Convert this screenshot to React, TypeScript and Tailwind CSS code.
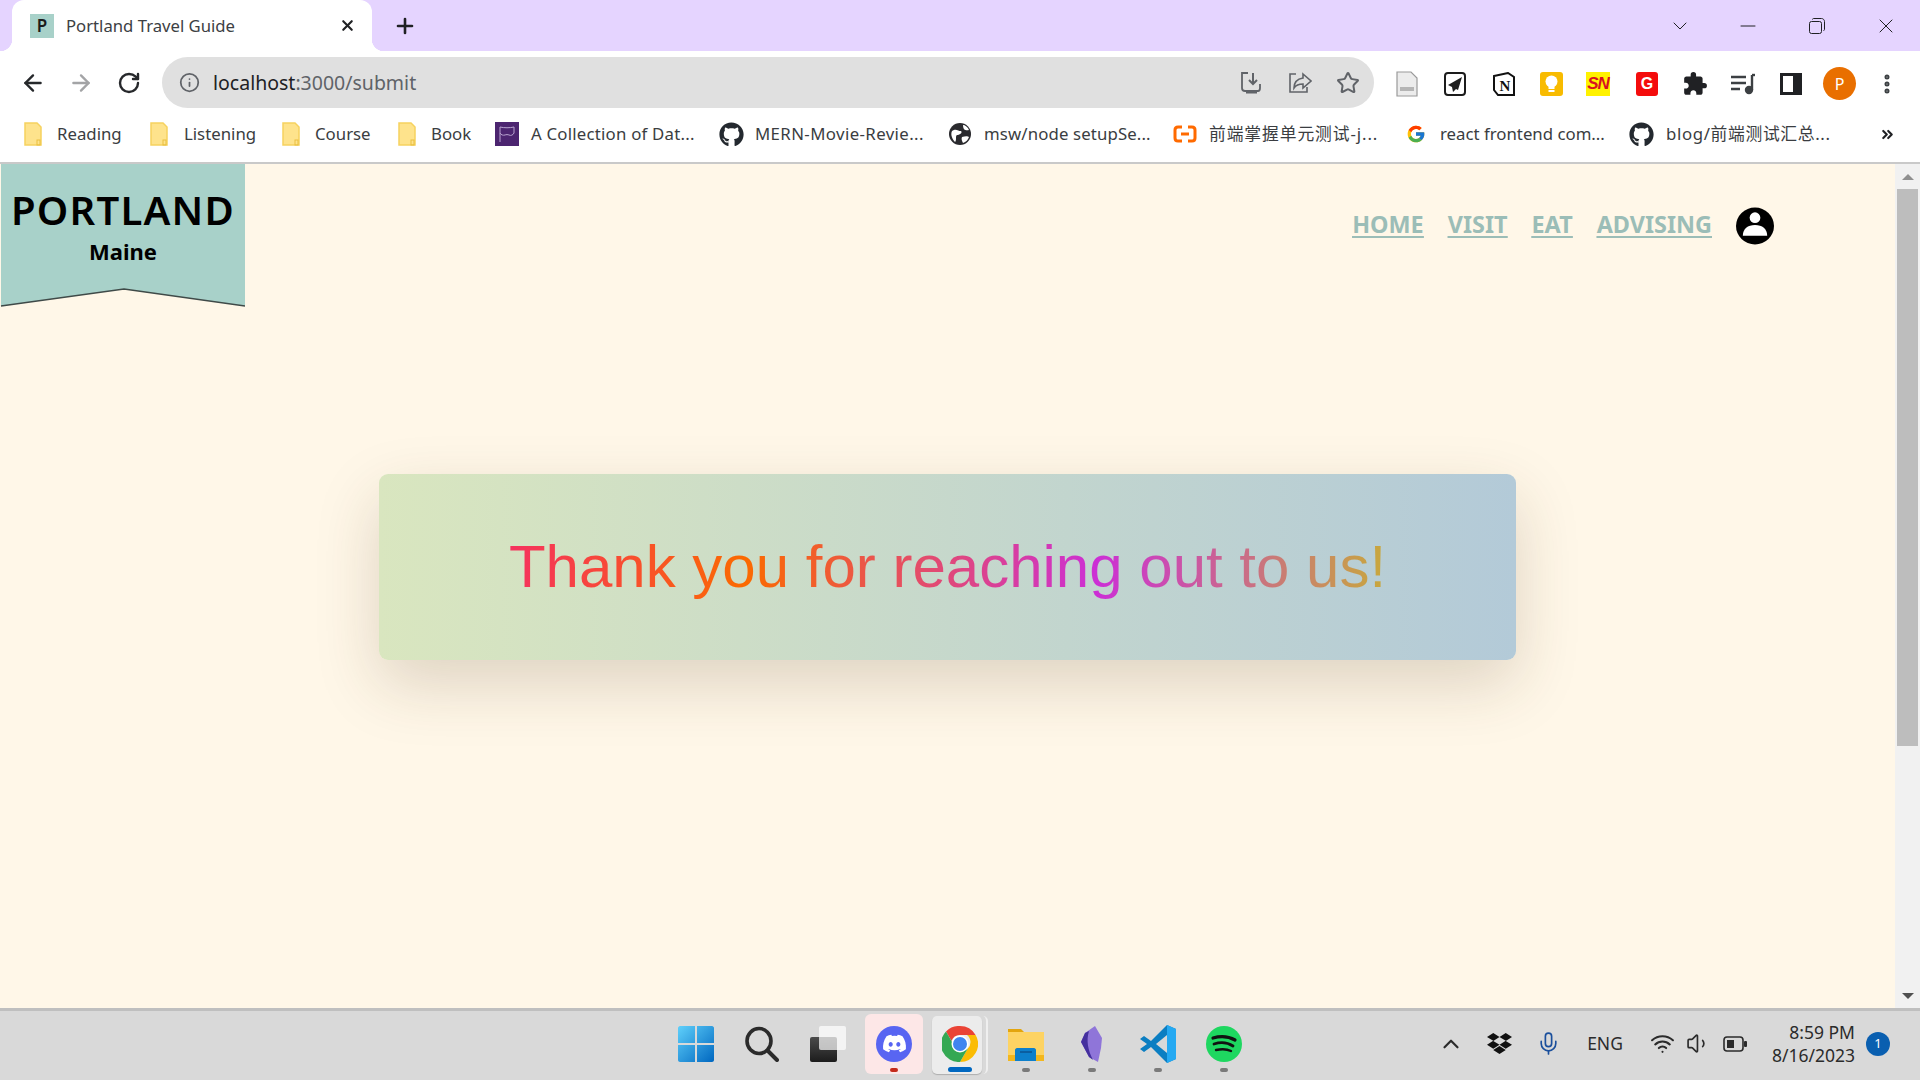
import React from 'react';
import {
  ArrowLeft,
  ArrowRight,
  ChevronDown,
  ChevronUp,
  ChevronsRight,
  Info,
  Mic,
  Minus,
  MoreVertical,
  Plus,
  RotateCw,
  Star,
  Volume1,
  Wifi,
  X,
} from 'lucide-react';
import { FaDiscord, FaDropbox, FaGithub } from 'react-icons/fa';
import { FcGoogle } from 'react-icons/fc';
import { MdExtension } from 'react-icons/md';

const sans = 'font-["Noto_Sans","Noto_Sans_CJK_SC",sans-serif]';

const FolderIcon = () => (
  <svg width="18" height="24" viewBox="0 0 18 24">
    <path d="M1 1h12l4 4v18H1z" fill="#fee38c" stroke="#f6d25f" strokeWidth="1.5" />
    <rect x="13" y="18" width="3" height="5" fill="none" stroke="#e9bf41" strokeWidth="1" />
  </svg>
);

const MaskIcon = () => (
  <div className="flex h-6 w-6 items-center justify-center bg-[#4c2570]">
    <svg width="18" height="18" viewBox="0 0 18 18" fill="none" stroke="#b9a4d0" strokeWidth="1">
      <path d="M2 2c4 1 10 1 14 0v6c-1 2-3 3-5 2-1-.5-3-.5-4 0-2 .5-4 0-5-2z" />
      <path d="M2 8v9" />
    </svg>
  </div>
);

const GlobeIcon = () => (
  <svg width="22" height="24" viewBox="0 0 22 22">
    <circle cx="11" cy="11" r="11" fill="#2a2a2e" />
    <path d="M3 8c4-3 6 0 9 0 2 2-2 4-4 4-2 1 0 5-2 7-2-2-5-7-3-11zM14 2c2 0 5 2 6 5-3 1-6 0-6-5zM13 14c3-1 6-1 7 0-1 3-3 5-6 6-1-2-2-4-1-6z" fill="#fff" />
  </svg>
);

const AliIcon = () => (
  <svg width="24" height="18" viewBox="0 0 24 18" fill="none" stroke="#ff6a00" strokeWidth="3">
    <path d="M9 2H5C3 2 2 3 2 5v8c0 2 1 3 3 3h4M15 2h4c2 0 3 1 3 3v8c0 2-1 3-3 3h-4M8 9h8" />
  </svg>
);

const bookmarks = [
  { label: 'Reading', icon: <FolderIcon />, cls: 'w-[126px] gap-[15px]' },
  { label: 'Listening', icon: <FolderIcon />, cls: 'w-[132px] gap-[16px]' },
  { label: 'Course', icon: <FolderIcon />, cls: 'w-[116px] gap-[15px]' },
  { label: 'Book', icon: <FolderIcon />, cls: 'w-[97px] gap-[15px]' },
  { label: 'A Collection of Dat...', icon: <MaskIcon />, cls: 'w-[224px] gap-[12px] tracking-[0.22px]' },
  { label: 'MERN-Movie-Revie...', icon: <FaGithub size={25} color="#24292f" />, cls: 'w-[230px] gap-[11px] tracking-[0.4px]' },
  { label: 'msw/node setupSe...', icon: <GlobeIcon />, cls: 'w-[224px] gap-[13px] tracking-[0.13px]' },
  { label: '前端掌握单元测试-j...', icon: <AliIcon />, cls: 'w-[233px] gap-[12px] tracking-[0.9px]' },
  { label: 'react frontend com...', icon: <FcGoogle size={20} />, cls: 'w-[223px] gap-[14px]' },
  { label: 'blog/前端测试汇总...', icon: <FaGithub size={25} color="#24292f" />, cls: 'w-[238px] gap-[12px] tracking-[0.65px]' },
];

const InstallIcon = () => (
  <svg width="24" height="24" viewBox="0 0 24 24" fill="none" stroke="#606368" strokeWidth="1.8">
    <path d="M9 2H3v15c0 2 1 3 3 3h13c1.500 0 2-1 2-3v-4" />
    <path d="M14 2v11M10 9l4 4 4-4" strokeWidth="2" />
    <path d="M7 21h11" strokeWidth="3" />
  </svg>
);

const ShareIcon = () => (
  <svg width="24" height="24" viewBox="0 0 24 24" fill="none" stroke="#606368" strokeWidth="1.6">
    <path d="M8 3H2v18h17v-5" />
    <path d="M15 3l8 7-8 7v-4c-4 0-7 1-9 4 0-6 3-9 9-10z" />
  </svg>
);

const Extensions = () => (
  <div className="flex items-center pt-[2px]">
    <svg className="ml-[22px]" width="22" height="26" viewBox="0 0 22 26">
      <path d="M1 1h14l6 6v18H1z" fill="#ececec" stroke="#9a9a9a" strokeWidth="1.200" />
      <rect x="4" y="16" width="14" height="4" fill="#b5b5b5" />
    </svg>
    <svg className="ml-[26px]" width="22" height="24" viewBox="0 0 22 24">
      <rect x="1" y="1" width="20" height="22" rx="3" fill="#fff" stroke="#1c1c1c" strokeWidth="2" />
      <path d="M18 5L4 13l4 2 1 5 3-3 2 1z" fill="#1c1c1c" />
    </svg>
    <svg className="ml-[27px]" width="22" height="24" viewBox="0 0 22 24">
      <path d="M1 4l14-3 6 4v18l-16 0-4-5z" fill="#fff" stroke="#111" strokeWidth="2" />
      <text x="12" y="19" textAnchor="middle" fontSize="15" fontWeight="700" fontFamily="Liberation Serif" fill="#111">N</text>
    </svg>
    <div className="ml-[25px] flex h-6 w-[23px] items-center justify-center rounded-[3px] bg-[#f8bb00]">
      <svg width="13" height="18" viewBox="0 0 13 18">
        <circle cx="6.500" cy="6.500" r="6" fill="#fff" />
        <rect x="3.500" y="11" width="6" height="3" fill="#fff" />
        <rect x="3.500" y="15" width="6" height="2" fill="#fff" />
      </svg>
    </div>
    <div className="ml-[23px] flex h-6 w-6 items-center justify-center bg-[#fff200] font-['Liberation_Sans',sans-serif] text-[17px] font-bold italic tracking-[-1px] text-[#d8121f]">
      SN
    </div>
    <div className="ml-[26px] flex h-6 w-[22px] items-center justify-center rounded-[3px] bg-[#f40c0c] font-['Liberation_Sans',sans-serif] text-[16px] font-bold text-white">
      G
    </div>
    <MdExtension className="ml-[24px]" size={26} color="#202124" />
    <svg className="ml-[23px]" width="24" height="22" viewBox="0 0 24 22" fill="none" stroke="#3c4043" strokeWidth="2.400">
      <path d="M0 4h15M0 10h15M0 16h9" />
      <path d="M21 2v15" />
      <path d="M21 2h3" />
      <circle cx="18" cy="17" r="3" fill="#3c4043" />
    </svg>
    <svg className="ml-[25px]" width="22" height="22" viewBox="0 0 22 22">
      <path d="M0 0h22v22H0z" fill="#202124" />
      <path d="M3 3h10v16H3z" fill="#fff" />
    </svg>
    <div className={`ml-[21px] flex h-[33px] w-[33px] items-center justify-center rounded-full bg-[#e96f00] text-[16px] text-white ${sans}`}>
      P
    </div>
    <MoreVertical className="ml-[19px]" size={24} strokeWidth={3} color="#3c4043" />
  </div>
);

const TabStrip = () => (
  <div className="flex h-[51px] items-center bg-[#e5d4ff]">
    <div className="relative ml-3 flex h-[51px] w-[360px] items-center rounded-t-xl bg-white pl-[18px] pr-[16px]">
      <div className="absolute bottom-0 left-[-12px] h-3 w-3 bg-[radial-gradient(circle_at_0_0,#e5d4ff_12px,#fff_12.5px)]" />
      <div className="absolute bottom-0 right-[-12px] h-3 w-3 bg-[radial-gradient(circle_at_100%_0,#e5d4ff_12px,#fff_12.5px)]" />
      <div className={`flex h-6 w-6 items-center justify-center bg-[#a8d1c9] text-[17px] font-semibold text-[#1c1c1c] ${sans}`}>
        P
      </div>
      <span className={`ml-3 flex-1 text-[16.7px] text-[#3c4043] ${sans}`}>Portland Travel Guide</span>
      <X size={17} strokeWidth={3} color="#202124" />
    </div>
    <Plus className="ml-[21px]" size={24} strokeWidth={2.6} color="#202124" />
    <div className="ml-auto flex items-center pr-[22px]">
      <ChevronDown size={24} strokeWidth={1} color="#202124" />
      <Minus className="ml-[44px]" size={24} strokeWidth={1} color="#202124" />
      <svg className="ml-[49px]" width="16" height="16" viewBox="0 0 16 16" fill="none" stroke="#202124" strokeWidth="1">
        <rect x="0.500" y="3.500" width="12" height="12" rx="2" />
        <path d="M3.500 1.500c0-.6.500-1 1-1h8c1.600 0 3 1.400 3 3v8c0 .6-.4 1-1 1" />
      </svg>
      <X className="ml-[49px]" size={24} strokeWidth={1} color="#202124" />
    </div>
  </div>
);

const Toolbar = () => (
  <div className="flex h-[63px] items-center bg-white pb-[6px] pt-[6px]">
    <ArrowLeft className="ml-[20px]" size={26} strokeWidth={2.2} color="#26282b" />
    <ArrowRight className="ml-[22px]" size={26} strokeWidth={2.2} color="#a3a4a6" />
    <RotateCw className="ml-[23px]" size={24} strokeWidth={2.4} color="#26282b" />
    <div className="ml-[21px] flex h-[51px] w-[1212px] shrink-0 items-center rounded-full bg-[#e0e0e0] pl-[17px] pr-[14px]">
      <Info size={21} color="#606368" />
      <div className={`ml-[13px] flex-1 text-[19.5px] text-[#202124] ${sans}`}>
        localhost<span className="text-[#5f6368]">:3000/submit</span>
      </div>
      <InstallIcon />
      <div className="ml-[25px]">
        <ShareIcon />
      </div>
      <Star className="ml-[24px]" size={24} strokeWidth={2} color="#606368" />
    </div>
    <Extensions />
  </div>
);

const BookmarkBar = () => (
  <div className={`flex h-[50px] items-center border-b-2 border-[#c9c9c9] bg-white pb-[8px] pl-[24px] text-[16.8px] text-[#3a3d41] ${sans}`}>
    {bookmarks.map((item) => (
      <div key={item.label} className={`flex shrink-0 items-center ${item.cls}`}>
        {item.icon}
        <span className="whitespace-nowrap">{item.label}</span>
      </div>
    ))}
    <ChevronsRight className="ml-[12px]" size={17} strokeWidth={3} color="#202124" />
  </div>
);

const Logo = () => (
  <div className="relative h-[143px] w-[245px]">
    <svg className="absolute inset-0" width="245" height="143" viewBox="0 0 245 143">
      <path d="M1 0h244v142L124 125 1 142z" fill="#a8d1c9" />
      <path d="M1 142l123-17 121 17" fill="none" stroke="#3f4a48" strokeWidth="1.500" />
    </svg>
    <div className={`relative flex flex-col items-center pl-[1px] pt-[22px] text-black ${sans}`}>
      <span className="text-[40px] font-semibold leading-[48px] tracking-[1.2px]">PORTLAND</span>
      <span className="mt-[3px] text-[22px] font-bold leading-[28px]">Maine</span>
    </div>
  </div>
);

const Avatar = () => (
  <svg className="translate-y-[2px]" width="38" height="38" viewBox="0 0 39 38">
    <ellipse cx="19.500" cy="19" rx="19.500" ry="19" fill="#000" />
    <circle cx="19.500" cy="10.500" r="5.500" fill="#fff" />
    <path d="M7 29c0-7 5-11 12.500-11S32 22 32 29z" fill="#fff" />
  </svg>
);

const Nav = () => (
  <div className={`flex items-center gap-[24px] pr-[121px] pt-[41px] text-[23.4px] font-bold leading-[32px] text-[#9bbdb7] underline underline-offset-[3px] ${sans}`}>
    <a>HOME</a>
    <a>VISIT</a>
    <a>EAT</a>
    <a>ADVISING</a>
    <Avatar />
  </div>
);

const Scrollbar = () => (
  <div className="flex w-[25px] flex-col items-center bg-[#f1f1f1]">
    <svg className="mt-[10px]" width="12" height="6" viewBox="0 0 12 6">
      <path d="M6 0l6 6H0z" fill="#8f8f8f" />
    </svg>
    <div className="mt-[9px] h-[557px] w-[21px] bg-[#bdbdbd]" />
    <svg className="mb-[9px] mt-auto" width="12" height="6" viewBox="0 0 12 6">
      <path d="M0 0h12L6 6z" fill="#505050" />
    </svg>
  </div>
);

const Page = () => (
  <div className="flex min-h-0 flex-1 bg-[#fff7e8]">
    <div className="flex-1">
      <div className="flex items-start justify-between">
        <Logo />
        <Nav />
      </div>
      <div className="ml-[379px] mt-[167px] flex h-[186px] w-[1137px] items-center justify-center rounded-[9px] bg-[linear-gradient(90deg,#d9e6bf,#b3cad8)] shadow-[0_24px_64px_rgba(70,50,20,0.18)]">
        <span className="bg-[linear-gradient(90deg,#f5325f_0%,#fb6a00_27%,#cc2fd5_67%,#c8a83c_100%)] bg-clip-text font-['Liberation_Sans',sans-serif] text-[60px] leading-[70px] text-transparent">
          Thank you for reaching out to us!
        </span>
      </div>
    </div>
    <Scrollbar />
  </div>
);

const WindowsIcon = () => (
  <svg width="36" height="36" viewBox="0 0 36 36">
    <defs>
      <linearGradient id="win" x1="0" y1="0" x2="1" y2="1">
        <stop offset="0" stopColor="#5fd0fb" />
        <stop offset="1" stopColor="#0067c0" />
      </linearGradient>
    </defs>
    <path d="M0 2c0-1 1-2 2-2h15v17H0zM19 0h15c1 0 2 1 2 2v15H19zM0 19h17v17H2c-1 0-2-1-2-2zM19 19h17v15c0 1-1 2-2 2H19z" fill="url(#win)" />
  </svg>
);

const SearchIcon = () => (
  <svg width="34" height="36" viewBox="0 0 34 36" fill="none" stroke="#2b2b2b">
    <ellipse cx="14" cy="15" rx="12" ry="12.500" strokeWidth="3.600" />
    <path d="M23 25l9 9" strokeWidth="4" strokeLinecap="round" />
  </svg>
);

const TaskViewIcon = () => (
  <div className="relative h-[36px] w-[36px]">
    <div className="absolute bottom-0 left-0 h-[25px] w-[27px] rounded-[2px] bg-[linear-gradient(#4b4b4b,#1c1c1c)]" />
    <div className="absolute right-0 top-0 h-[24px] w-[27px] rounded-[2px] bg-white/70" />
  </div>
);

const DiscordIcon = () => (
  <div className="flex h-[36px] w-[36px] items-center justify-center rounded-full bg-[#5865f2]">
    <FaDiscord size={25} color="#fff" />
  </div>
);

const ChromeIcon = () => (
  <svg width="36" height="36" viewBox="0 0 36 36">
    <path d="M18 0a18 18 0 0 1 15.600 9H18a9 9 0 0 0-8.500 6L4 5.500A18 18 0 0 1 18 0z" fill="#ea4335" />
    <path d="M33.600 9A18 18 0 0 1 18 36l7.800-13.500A9 9 0 0 0 25 9z" fill="#fbbc04" />
    <path d="M4 5.500l7.800 13.500A9 9 0 0 0 25.800 22.500L18 36A18 18 0 0 1 4 5.500z" fill="#34a853" />
    <circle cx="18" cy="18" r="8.500" fill="#fff" />
    <circle cx="18" cy="18" r="7" fill="#3f84ef" />
  </svg>
);

const FilesIcon = () => (
  <svg width="36" height="36" viewBox="0 0 36 36">
    <path d="M0 3h13l4 4h19v6H0z" fill="#e3a50e" />
    <path d="M0 6h36v29H0z" fill="#fdd363" />
    <path d="M0 29h36v6H0z" fill="#f3b71d" />
    <path d="M7 35V24c0-1 1-2 2-2h17c1 0 2 1 2 2v11z" fill="#0d7fcb" />
    <rect x="12" y="25" width="12" height="2" fill="#0b5ea0" />
  </svg>
);

const ObsidianIcon = () => (
  <svg width="22" height="36" viewBox="0 0 22 36">
    <path d="M14 0l7 12-1 10-3 14-9-5-8-15 4-9z" fill="#8f75d9" />
    <path d="M4 7L0 16l8 15 4 3C7 24 5 15 8 5z" fill="#45309e" />
  </svg>
);

const CodeIcon = () => (
  <svg width="36" height="38" viewBox="0 0 36 38">
    <path d="M27 0l9 4v30l-9 4L11 22l-7 5-4-3 7-5-7-5 4-3 7 5z" fill="#0b7ec2" />
    <path d="M27 0l9 4v30l-9 4z" fill="#25a9f2" />
    <path d="M27 10L16 19l11 9z" fill="#d9d9d9" />
  </svg>
);

const SpotifyIcon = () => (
  <svg width="36" height="36" viewBox="0 0 36 36" fill="none" stroke="#111" strokeLinecap="round">
    <circle cx="18" cy="18" r="18" fill="#1ed760" stroke="none" />
    <path d="M7 12c7-2 15-2 22 2" strokeWidth="3.200" />
    <path d="M8 18c6-2 13-2 19 2" strokeWidth="2.800" />
    <path d="M10 24c5-1 11-1 15 1" strokeWidth="2.400" />
  </svg>
);

const TaskSlot = ({ children, dot }: { children: React.ReactNode; dot?: string }) => (
  <div className="relative flex h-[65px] w-[66px] items-center justify-center">
    {children}
    {dot && <div className={`absolute bottom-[4px] left-1/2 h-1 w-2 -translate-x-1/2 rounded-full ${dot}`} />}
  </div>
);

const Taskbar = () => (
  <div className="grid h-[72px] grid-cols-[1fr_auto_1fr] items-center border-t-[3px] border-[#bfbfbf] bg-[#d9d9d9] pb-[4px]">
    <div />
    <div className="flex items-center">
      <TaskSlot>
        <WindowsIcon />
      </TaskSlot>
      <TaskSlot>
        <SearchIcon />
      </TaskSlot>
      <TaskSlot>
        <TaskViewIcon />
      </TaskSlot>
      <TaskSlot dot="bg-[#c42b1c]">
        <div className="absolute inset-x-[4px] bottom-[2px] top-[3px] rounded-[6px] bg-[#fde7e7]" />
        <div className="relative">
          <DiscordIcon />
        </div>
      </TaskSlot>
      <TaskSlot>
        <div className="absolute bottom-[2px] left-[8px] top-[5px] w-[53px] rounded-[5px] border-r-2 border-[#efefef]" />
        <div className="absolute bottom-[2px] left-[5px] top-[5px] w-[50px] rounded-[5px] bg-[#ececec] shadow-[0_1px_1px_rgba(0,0,0,0.2)]" />
        <div className="relative">
          <ChromeIcon />
        </div>
        <div className="absolute bottom-[4px] left-[21px] h-[5px] w-6 rounded-full bg-[#0067c0]" />
      </TaskSlot>
      <TaskSlot dot="bg-[#7a7a7a]">
        <FilesIcon />
      </TaskSlot>
      <TaskSlot dot="bg-[#7a7a7a]">
        <ObsidianIcon />
      </TaskSlot>
      <TaskSlot dot="bg-[#7a7a7a]">
        <CodeIcon />
      </TaskSlot>
      <TaskSlot dot="bg-[#7a7a7a]">
        <SpotifyIcon />
      </TaskSlot>
    </div>
    <div className={`flex items-center justify-end pr-[30px] text-[#2b2b2b] ${sans}`}>
      <ChevronUp size={26} strokeWidth={2} />
      <FaDropbox className="ml-[23px]" size={25} color="#111" />
      <Mic className="ml-[24px]" size={25} strokeWidth={1.6} color="#1a4f9c" />
      <span className="ml-[26px] text-[17.5px]">ENG</span>
      <Wifi className="ml-[27px]" size={25} strokeWidth={2} />
      <Volume1 className="ml-[11px]" size={25} strokeWidth={1.6} />
      <svg className="ml-[12px]" width="24" height="16" viewBox="0 0 24 16">
        <rect x="1" y="1" width="19" height="14" rx="3" fill="none" stroke="#2b2b2b" strokeWidth="1.600" />
        <rect x="4" y="4" width="7" height="8" fill="#2b2b2b" />
        <rect x="21" y="5" width="3" height="6" rx="1" fill="#2b2b2b" />
      </svg>
      <div className="ml-[25px] flex flex-col items-end text-[17.5px] leading-[23px]">
        <span>8:59 PM</span>
        <span>8/16/2023</span>
      </div>
      <div className="ml-[11px] flex h-6 w-6 items-center justify-center rounded-full bg-[#0a5fb0] text-[13px] text-white">
        1
      </div>
    </div>
  </div>
);

export default function App() {
  return (
    <div className="flex h-screen w-full flex-col overflow-hidden">
      <TabStrip />
      <Toolbar />
      <BookmarkBar />
      <Page />
      <Taskbar />
    </div>
  );
}
